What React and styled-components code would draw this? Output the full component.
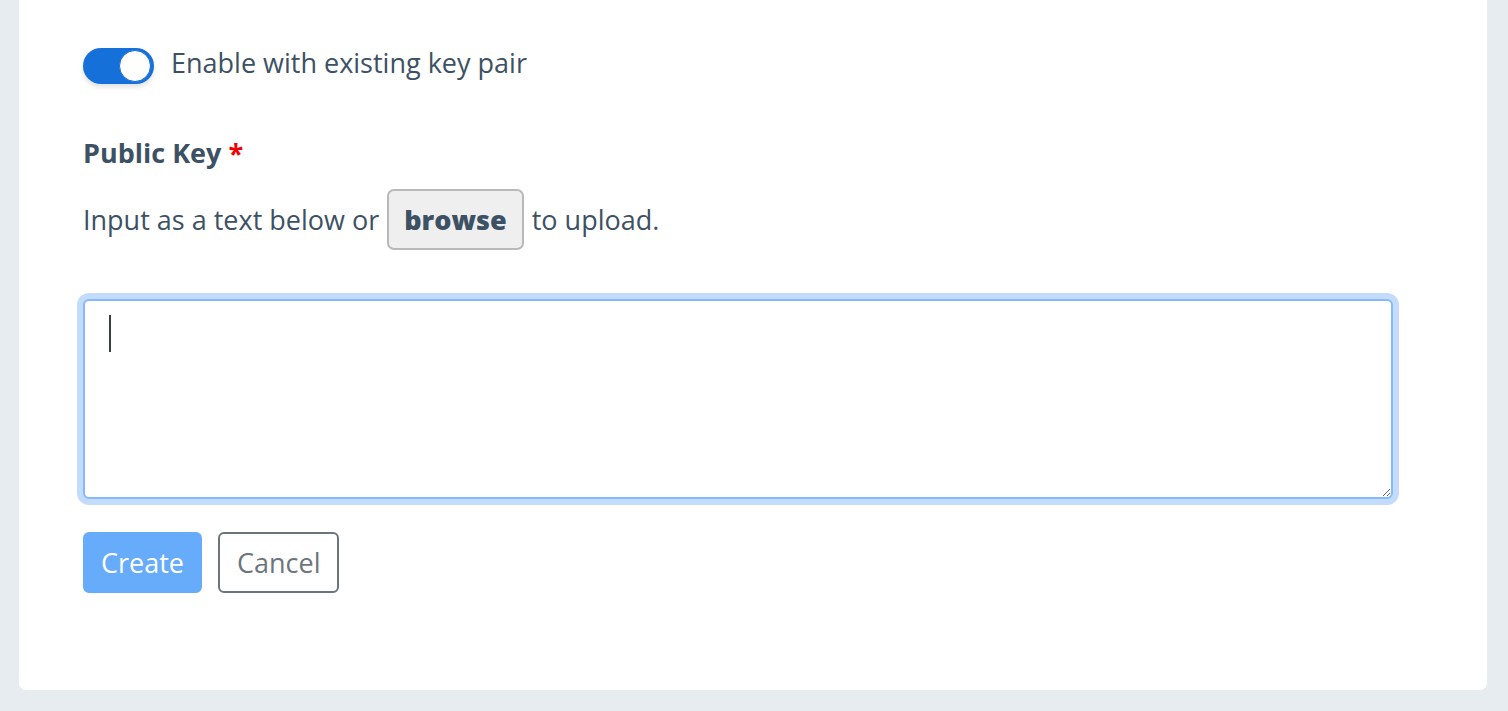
import React, { useState } from 'react';
import styled, { createGlobalStyle } from 'styled-components';

const GlobalStyle = createGlobalStyle`
  html, body {
    margin: 0;
    padding: 0;
    background: #e7ecf0;
  }
  body {
    font-family: 'Open Sans', 'Lato', sans-serif;
    color: #3d5165;
  }
`;

export default function App() {
  const [enabled, setEnabled] = useState(true);
  const [value, setValue] = useState('');

  return (
    <>
      <GlobalStyle />
      <Page>
        <Card>
          <SwitchRow>
            <Switch type="button" $on={enabled} onClick={() => setEnabled(!enabled)}>
              <Knob $on={enabled} />
            </Switch>
            <SwitchLabel>Enable with existing key pair</SwitchLabel>
          </SwitchRow>

          <FieldLabel>
            Public Key <Required>*</Required>
          </FieldLabel>

          <HelpRow>
            <span>Input as a text below or</span>
            <BrowseButton type="button">browse</BrowseButton>
            <span>to upload.</span>
          </HelpRow>

          <TextareaWrap>
            <KeyInput value={value} onChange={(e) => setValue(e.target.value)} />
            {value === '' && <Caret />}
          </TextareaWrap>

          <Actions>
            <PrimaryButton type="button" disabled>Create</PrimaryButton>
            <OutlineButton type="button">Cancel</OutlineButton>
          </Actions>
        </Card>
      </Page>
    </>
  );
}

const Page = styled.div`
  padding: 0 21px 21px 19px;
  min-height: 711px;
  box-sizing: border-box;
`;

const Card = styled.div`
  background: #ffffff;
  border-radius: 0 0 7px 7px;
  padding: 48px 94px 97px 64px;
  display: flex;
  flex-direction: column;
`;

const SwitchRow = styled.div`
  display: flex;
  align-items: center;
  gap: 17px;
  height: 36px;
`;

const Switch = styled.button`
  position: relative;
  flex: none;
  width: 71px;
  height: 36px;
  border-radius: 18px;
  border: none;
  padding: 0;
  background: ${(p) => (p.$on ? '#1570d9' : '#cfd6dc')};
  box-shadow: 0 3px 5px rgba(0, 0, 0, 0.12);
  cursor: pointer;
`;

const Knob = styled.span`
  position: absolute;
  top: 2px;
  left: ${(p) => (p.$on ? '36px' : '2px')};
  width: 30px;
  height: 30px;
  border-radius: 50%;
  background: #ffffff;
  border: 1px solid #1570d9;
`;

const SwitchLabel = styled.span`
  font-size: 27px;
  line-height: 36px;
  margin-top: -7px;
  color: #3d5165;
`;

const FieldLabel = styled.div`
  margin-top: 51px;
  font-size: 27px;
  font-weight: 700;
  line-height: 36px;
  color: #3d5165;
`;

const Required = styled.span`
  color: #f20000;
`;

const HelpRow = styled.div`
  margin-top: 18px;
  display: flex;
  align-items: center;
  gap: 8px;
  height: 61px;
  font-size: 27px;
  line-height: 36px;
`;

const BrowseButton = styled.button`
  height: 61px;
  padding: 0 15px;
  background: #efefef;
  border: 2px solid #b9b9b9;
  border-radius: 7px;
  font-family: inherit;
  font-size: 27px;
  font-weight: 800;
  color: #3d5165;
  cursor: pointer;
`;

const TextareaWrap = styled.div`
  position: relative;
  margin-top: 49px;
  display: flex;
`;

const KeyInput = styled.textarea`
  flex: 1;
  height: 200px;
  box-sizing: border-box;
  border: 2px solid #86b9fd;
  border-radius: 6px;
  box-shadow: 0 0 0 6px #c3dcfd;
  padding: 14px 24px;
  font-family: inherit;
  font-size: 27px;
  color: #3d5165;
  resize: vertical;
  outline: none;
`;

const Caret = styled.span`
  position: absolute;
  left: 26px;
  top: 16px;
  width: 2px;
  height: 37px;
  background: #3a3f44;
  pointer-events: none;
`;

const Actions = styled.div`
  margin-top: 33px;
  display: flex;
  gap: 16px;
`;

const BaseButton = styled.button`
  height: 61px;
  padding: 0 ${(p) => p.$padX || 17}px;
  border-radius: 6px;
  font-family: inherit;
  font-size: 27px;
  cursor: pointer;
`;

const PrimaryButton = styled(BaseButton).attrs({ $padX: 16 })`
  background: #66acfb;
  border: 2px solid #66acfb;
  color: #ffffff;
  &:disabled {
    cursor: default;
  }
`;

const OutlineButton = styled(BaseButton)`
  background: #ffffff;
  border: 2px solid #6c757d;
  color: #6c757d;
`;
